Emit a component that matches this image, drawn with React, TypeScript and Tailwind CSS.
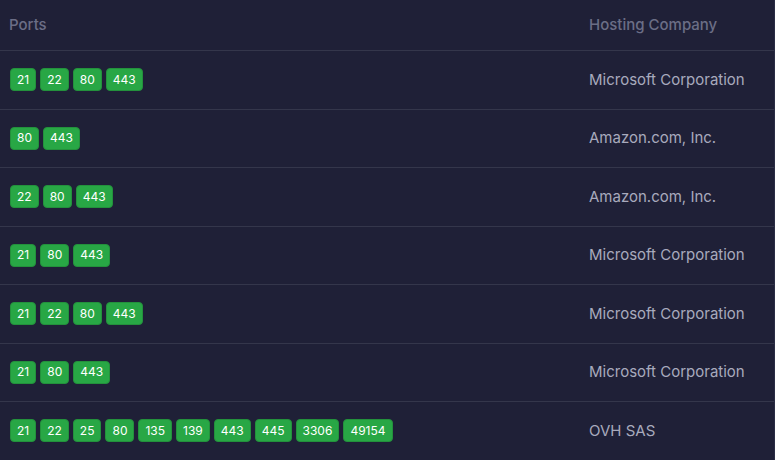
import React from "react";

const rows: { ports: string[]; host: string }[] = [
  { ports: ["21", "22", "80", "443"], host: "Microsoft Corporation" },
  { ports: ["80", "443"], host: "Amazon.com, Inc." },
  { ports: ["22", "80", "443"], host: "Amazon.com, Inc." },
  { ports: ["21", "80", "443"], host: "Microsoft Corporation" },
  { ports: ["21", "22", "80", "443"], host: "Microsoft Corporation" },
  { ports: ["21", "80", "443"], host: "Microsoft Corporation" },
  { ports: ["21", "22", "25", "80", "135", "139", "443", "445", "3306", "49154"], host: "OVH SAS" },
];

export default function App() {
  return (
    <div
      className="w-[775px] h-[460px] overflow-hidden bg-[#1f2037] border-r border-[#2a2c44]"
      style={{ fontFamily: "Inter, 'Noto Sans', sans-serif" }}
    >
      <div className="flex h-[51px] items-center border-b border-[#34364b] box-border">
        <div className="w-[580px] pl-[9px] text-[15px] text-[#6b6e86] font-medium">Ports</div>
        <div className="flex-1 pl-[9px] text-[15px] text-[#6b6e86] font-medium">Hosting Company</div>
      </div>
      {rows.map((r, i) => (
        <div key={i} className="flex h-[58.5px] items-center border-b border-[#34364b] box-border">
          <div className="w-[580px] pl-[10px] flex gap-[4px]">
            {r.ports.map((p, j) => (
              <span
                key={j}
                className="h-[23px] px-[6px] flex items-center rounded-[4px] bg-[#28a745] border border-[#23913c] text-white text-[12px] leading-none"
              >
                {p}
              </span>
            ))}
          </div>
          <div className="flex-1 pl-[9px] text-[15px] text-[#a8aabd]">{r.host}</div>
        </div>
      ))}
    </div>
  );
}
